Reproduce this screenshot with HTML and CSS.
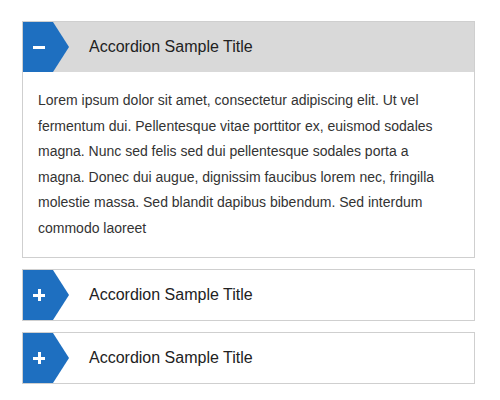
FILE: index.html
```html
<!DOCTYPE html>
<html>
<head>
<meta charset="utf-8">
<link rel="stylesheet" href="styles.css">
</head>
<body>
<div class="accordion">
  <div class="panel open">
    <div class="head">
      <div class="tab"><span class="icon minus"></span></div>
      <div class="title">Accordion Sample Title</div>
    </div>
    <div class="body">Lorem ipsum dolor sit amet, consectetur adipiscing elit. Ut vel fermentum dui. Pellentesque vitae porttitor ex, euismod sodales magna. Nunc sed felis sed dui pellentesque sodales porta a magna. Donec dui augue, dignissim faucibus lorem nec, fringilla molestie massa. Sed blandit dapibus bibendum. Sed interdum commodo laoreet</div>
  </div>
  <div class="panel">
    <div class="head">
      <div class="tab"><span class="icon plus"></span></div>
      <div class="title">Accordion Sample Title</div>
    </div>
  </div>
  <div class="panel">
    <div class="head">
      <div class="tab"><span class="icon plus"></span></div>
      <div class="title">Accordion Sample Title</div>
    </div>
  </div>
</div>
</body>
</html>
```
FILE: styles.css
```css
html, body { margin: 0; padding: 0; background: #fff; }
body { font-family: "Liberation Sans", Arial, sans-serif; }
.accordion {
  width: 453px;
  margin: 21px 0 0 22px;
  display: flex;
  flex-direction: column;
  gap: 11px;
}
.panel {
  border: 1px solid #cfcfcf;
  background: #fff;
}
.head {
  display: flex;
  align-items: center;
  height: 50px;
  background: #fff;
}
.panel.open .head { background: #d9d9d9; }
.tab {
  position: relative;
  width: 30px;
  height: 50px;
  background: #1e6fc0;
  display: flex;
  align-items: center;
  justify-content: center;
}
.tab::after {
  content: "";
  position: absolute;
  left: 30px;
  top: 0;
  border-top: 25px solid transparent;
  border-bottom: 25px solid transparent;
  border-left: 16px solid #1e6fc0;
}
.icon { position: relative; display: block; width: 12px; height: 12px; margin-left: 2px; }
.icon::before {
  content: "";
  position: absolute;
  left: 0; top: 4.5px;
  width: 12px; height: 3px;
  background: #fff;
}
.icon.plus::after {
  content: "";
  position: absolute;
  left: 4.5px; top: 0;
  width: 3px; height: 12px;
  background: #fff;
}
.title {
  margin-left: 36px;
  font-size: 16px;
  color: #222;
}
.body {
  height: 153px;
  padding: 16px 15px 16px 15px;
  font-size: 14px;
  line-height: 25.5px;
  color: #333;
}
```
